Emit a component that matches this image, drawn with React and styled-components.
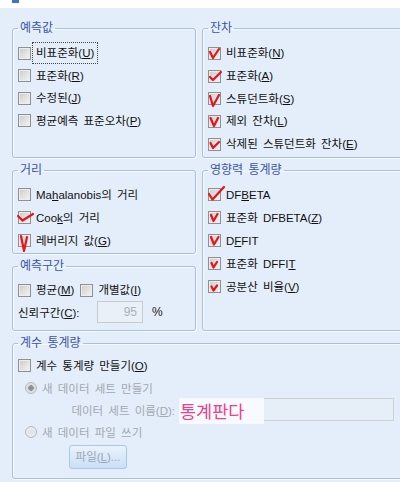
import React from 'react';
import styled, { createGlobalStyle } from 'styled-components';

const GlobalStyle = createGlobalStyle`
    html, body {
        margin: 0;
        padding: 0;
        background: #e4eefa;
        overflow: hidden;
    }

    body {
        font-family: "Liberation Sans", "Noto Sans CJK KR", sans-serif;
        font-size: 11.5px;
        word-spacing: 2px;
        color: #111;
    }
`;

const Page = styled.div`
    width: 400px;
    height: 482px;
    overflow: hidden;
    background: #e4eefa;
`;

const TopStrip = styled.div`
    height: 8px;
    background: #ffffff;
    padding-left: 12px;
`;

const TopIcon = styled.div`
    display: block;
    width: 7px;
    height: 3px;
    background: #3b76c6;
`;

const Layout = styled.div`
    width: 430px;
    padding: 13px 0 0 12px;

    display: grid;
    grid-template-columns: 184px 1fr;
    grid-template-rows: 137px 91px 72px 143px;
    column-gap: 6px;
    row-gap: 5px;
`;

const Group = styled.fieldset`
    grid-column: ${p => p.$col || 'auto'};
    grid-row: ${p => p.$row || 'auto'};

    margin: 0;
    min-width: 0;
    height: 100%;
    box-sizing: border-box;
    padding: ${p => p.$pt ?? 5}px 5px 0 5px;

    border: 1px solid #a7c0dd;
    border-radius: 3px;
    box-shadow: inset 1px 1px 0 #f6faff, 1px 1px 0 #f6faff;
`;

const Legend = styled.legend`
    padding: 0 2px;
    font-size: 12px;
    line-height: 14px;
    color: #3b56a6;
`;

const Row = styled.div`
    display: flex;
    align-items: center;
    height: ${p => p.$h || 23}px;
    padding-left: ${p => p.$indent || 0}px;
    gap: 2px;
    color: ${p => (p.$off ? '#a2a8b0' : 'inherit')};
`;

const Label = styled.span`
    padding: 0 3px;
    line-height: 20px;
    white-space: nowrap;
    outline: ${p => (p.$focus ? '1px dotted #444' : 'none')};
    margin-right: ${p => p.$mr || 0}px;
`;

const Key = styled.span`
    text-decoration: underline;
`;

const Box = styled.span`
    position: relative;
    flex: none;
    width: 13px;
    height: 13px;
    box-sizing: border-box;
    border: 1px solid #8f9090;
    background: linear-gradient(135deg, #c9caca 0%, #e3e3e3 55%, #f3f3f3 100%);
    box-shadow: inset 0 0 0 1px #ececec;
`;

const Tick = styled.svg`
    position: absolute;
    left: -1px;
    top: -1px;
    overflow: visible;
`;

const Radio = styled.span`
    flex: none;
    width: 12px;
    height: 12px;
    box-sizing: border-box;
    border-radius: 50%;
    border: 1px solid #b4b8bd;
    background: radial-gradient(circle, ${p => (p.$on ? '#8d9196 0 2.5px, #d7dadd 3px' : '#dfe2e5 0')}, #eef0f2 100%);
    margin-right: 3px;
`;

const SmallInput = styled.div`
    width: 46px;
    height: 22px;
    box-sizing: border-box;
    border: 1px solid #c8ccd1;
    background: #e9f0f8;
    color: #aab0b7;
    font-size: 12px;
    line-height: 20px;
    text-align: right;
    padding-right: 5px;
`;

const Percent = styled.span`
    margin-left: 7px;
    font-size: 12px;
    color: #222;
`;

const FieldLabel = styled.span`
    width: ${p => p.$w}px;
    flex: none;
    text-align: ${p => p.$align || 'left'};
    white-space: nowrap;
`;

const NameInput = styled.div`
    position: relative;
    width: 215px;
    height: 23px;
    margin-left: 2px;
    box-sizing: border-box;
    border: 1px solid #cdd1d6;
    background: #e6eef8;
`;

const Watermark = styled.span`
    position: absolute;
    left: -1px;
    top: -1px;
    width: 85px;
    height: 26px;
    padding-left: 1px;
    box-sizing: border-box;
    background: rgba(248, 251, 255, 0.9);
    color: #ee3f88;
    font-family: "Noto Sans CJK KR", sans-serif;
    font-size: 17.5px;
    line-height: 25px;
    word-spacing: 0;
    white-space: nowrap;
`;

const FileButton = styled.div`
    width: 58px;
    height: 24px;
    margin-left: 51px;
    box-sizing: border-box;
    border: 1px solid #a9c7e8;
    border-radius: 3px;
    background: linear-gradient(#e9f3fd, #cadff5);
    color: #9aa6b4;
    line-height: 22px;
    text-align: center;
`;

const marks = {
    n: 'M2 5 L5 11 L11 2',
    a: 'M2 7 L5 10 L13 2',
    s: 'M2 4 L5 14 L11 3',
    l: 'M2.5 3 L6 11 L10 3',
    e: 'M2.5 5 L5 10 L11 4',
    cook: 'M0 5 L4.5 9.5 L15 3',
    lev: 'M3 2 L6 17 L9 3',
    dfb: 'M1 6 L4.5 11.5 L16 -1',
    zdfb: 'M3 4 L5.5 10 L9.5 3',
    dffit: 'M3 3 L6 10.5 L10.5 3',
    zdffit: 'M3.5 6 L5.5 10.5 L9 5',
    cov: 'M3.5 6.5 L5.5 10.5 L9 5.5',
};

const Check = ({ mark }) => (
    <Box>
        {mark && (
            <Tick width="13" height="13" viewBox="0 0 13 13">
                <path d={marks[mark]} fill="none" stroke="#e8121b" strokeWidth="2.2" strokeLinecap="round" strokeLinejoin="round" />
            </Tick>
        )}
    </Box>
);

const Item = ({ mark, h, focus, children }) => (
    <Row $h={h}>
        <Check mark={mark} />
        <Label $focus={focus}>{children}</Label>
    </Row>
);

export default function App() {
    return (
        <Page>
            <GlobalStyle />
            <TopStrip>
                <TopIcon />
            </TopStrip>

            <Layout>
                <Group $col="1" $row="1" $pt={7}>
                    <Legend>예측값</Legend>
                    <Item h={22.5} focus>비표준화(<Key>U</Key>)</Item>
                    <Item h={22.5}>표준화(<Key>R</Key>)</Item>
                    <Item h={22.5}>수정된(<Key>J</Key>)</Item>
                    <Item h={22.5}>평균예측 표준오차(<Key>P</Key>)</Item>
                </Group>

                <Group $col="2" $row="1" $pt={7}>
                    <Legend>잔차</Legend>
                    <Item h={22.7} mark="n">비표준화(<Key>N</Key>)</Item>
                    <Item h={22.7} mark="a">표준화(<Key>A</Key>)</Item>
                    <Item h={22.7} mark="s">스튜던트화(<Key>S</Key>)</Item>
                    <Item h={22.7} mark="l">제외 잔차(<Key>L</Key>)</Item>
                    <Item h={22.7} mark="e">삭제된 스튜던트화 잔차(<Key>E</Key>)</Item>
                </Group>

                <Group $col="1" $row="2" $pt={6}>
                    <Legend>거리</Legend>
                    <Item>Ma<Key>h</Key>alanobis의 거리</Item>
                    <Item mark="cook">Coo<Key>k</Key>의 거리</Item>
                    <Item mark="lev">레버리지 값(<Key>G</Key>)</Item>
                </Group>

                <Group $col="2" $row="2 / span 2" $pt={6}>
                    <Legend>영향력 통계량</Legend>
                    <Item mark="dfb">DF<Key>B</Key>ETA</Item>
                    <Item mark="zdfb">표준화 DFBETA(<Key>Z</Key>)</Item>
                    <Item mark="dffit">D<Key>F</Key>FIT</Item>
                    <Item mark="zdffit">표준화 DFFI<Key>T</Key></Item>
                    <Item mark="cov">공분산 비율(<Key>V</Key>)</Item>
                </Group>

                <Group $col="1" $row="3" $pt={6}>
                    <Legend>예측구간</Legend>
                    <Row $h={22}>
                        <Check />
                        <Label $mr={1}>평균(<Key>M</Key>)</Label>
                        <Check />
                        <Label>개별값(<Key>I</Key>)</Label>
                    </Row>
                    <Row $h={22}>
                        <FieldLabel $w={77}>신뢰구간(<Key>C</Key>):</FieldLabel>
                        <SmallInput>95</SmallInput>
                        <Percent>%</Percent>
                    </Row>
                </Group>

                <Group $col="1 / span 2" $row="4" $pt={4}>
                    <Legend>계수 통계량</Legend>
                    <Item>계수 통계량 만들기(<Key>O</Key>)</Item>
                    <Row $h={22} $indent={7} $off>
                        <Radio $on />
                        <span>새 데이터 세트 만들기</span>
                    </Row>
                    <Row $h={21} $off>
                        <FieldLabel $w={157} $align="right">데이터 세트 이름(<Key>D</Key>):</FieldLabel>
                        <NameInput>
                            <Watermark>통계판다</Watermark>
                        </NameInput>
                    </Row>
                    <Row $h={24} $indent={7} $off>
                        <Radio />
                        <span>새 데이터 파일 쓰기</span>
                    </Row>
                    <Row $h={26}>
                        <FileButton>파일(<Key>L</Key>)...</FileButton>
                    </Row>
                </Group>
            </Layout>
        </Page>
    );
}
